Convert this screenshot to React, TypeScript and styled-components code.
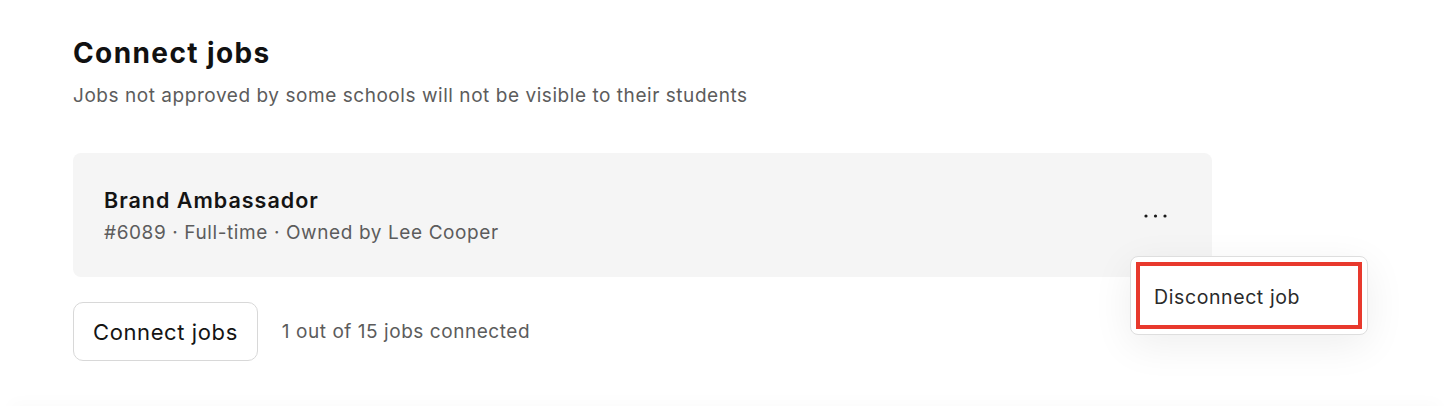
import React from "react";
import styled, { createGlobalStyle } from "styled-components";

const GlobalStyle = createGlobalStyle`
  body {
    margin: 0;
    background: #ffffff;
    font-family: Inter, "Noto Sans", sans-serif;
    color: #111111;
  }
`;

const Page = styled.div`
  position: relative;
  height: 406px;
  padding: 37px 73px 0;
  box-sizing: border-box;
  overflow: hidden;

  &::after {
    content: "";
    position: absolute;
    left: 10px;
    right: 10px;
    bottom: -24px;
    height: 24px;
    box-shadow: 0 -4px 16px rgba(0, 0, 0, 0.02);
  }
`;

const Title = styled.h1`
  margin: 0;
  font-size: 28px;
  line-height: 32px;
  font-weight: 700;
  letter-spacing: 1.4px;
  color: #111111;
`;

const Subtitle = styled.p`
  margin: 15px 0 0;
  font-size: 19px;
  line-height: 24px;
  letter-spacing: 0.55px;
  color: #5c5c5c;
`;

const Section = styled.section`
  width: 1139px;
  margin-top: 45px;
`;

const JobCard = styled.div`
  position: relative;
  height: 124px;
  box-sizing: border-box;
  padding: 2px 41px 0 31px;
  display: flex;
  align-items: center;
  justify-content: space-between;
  background: #f5f5f5;
  border-radius: 8px;
`;

const JobInfo = styled.div`
  display: flex;
  flex-direction: column;
  gap: 8px;
`;

const JobName = styled.div`
  font-size: 21.5px;
  line-height: 26px;
  font-weight: 600;
  letter-spacing: 1px;
  color: #141414;
`;

const JobMeta = styled.div`
  font-size: 19px;
  line-height: 24px;
  letter-spacing: 0.6px;
  color: #5c5c5c;
`;

const MoreButton = styled.button`
  width: 32px;
  height: 32px;
  display: flex;
  align-items: center;
  justify-content: center;
  padding: 0;
  border: none;
  background: transparent;
  cursor: pointer;
`;

const Menu = styled.div`
  position: absolute;
  top: 103px;
  right: -156px;
  width: 238px;
  box-sizing: border-box;
  padding: 5px;
  background: #ffffff;
  border: 1px solid #dedede;
  border-radius: 8px;
  box-shadow: 0 10px 40px rgba(0, 0, 0, 0.07);
`;

const MenuItem = styled.div<{ highlighted?: boolean }>`
  height: 67px;
  box-sizing: border-box;
  display: flex;
  align-items: center;
  padding: 3px 0 0 14px;
  font-size: 19.5px;
  letter-spacing: 0.6px;
  color: #2a2a2a;
  border: ${(p) => (p.highlighted ? "4px solid #e8392d" : "4px solid transparent")};
`;

const Footer = styled.div`
  display: flex;
  align-items: center;
  gap: 24px;
  margin-top: 25px;
`;

const ConnectButton = styled.button`
  height: 59px;
  padding: 0 19px;
  font-family: Inter, "Noto Sans", sans-serif;
  font-size: 22px;
  letter-spacing: 0.6px;
  color: #141414;
  background: #ffffff;
  border: 1px solid #d8d8d8;
  border-radius: 10px;
  cursor: pointer;
`;

const Count = styled.span`
  font-size: 19px;
  letter-spacing: 0.55px;
  color: #5c5c5c;
`;

const Dots = () => (
  <svg width="23" height="4" viewBox="0 0 23 4" fill="#1a1a1a">
    <circle cx="2" cy="2" r="1.6" />
    <circle cx="11.5" cy="2" r="1.6" />
    <circle cx="21" cy="2" r="1.6" />
  </svg>
);

export default function App() {
  return (
    <>
      <GlobalStyle />
      <Page>
        <Title>Connect jobs</Title>
        <Subtitle>Jobs not approved by some schools will not be visible to their students</Subtitle>
        <Section>
          <JobCard>
            <JobInfo>
              <JobName>Brand Ambassador</JobName>
              <JobMeta>#6089 · Full-time · Owned by Lee Cooper</JobMeta>
            </JobInfo>
            <MoreButton aria-label="More actions">
              <Dots />
            </MoreButton>
            <Menu>
              <MenuItem highlighted>Disconnect job</MenuItem>
            </Menu>
          </JobCard>
          <Footer>
            <ConnectButton>Connect jobs</ConnectButton>
            <Count>1 out of 15 jobs connected</Count>
          </Footer>
        </Section>
      </Page>
    </>
  );
}
